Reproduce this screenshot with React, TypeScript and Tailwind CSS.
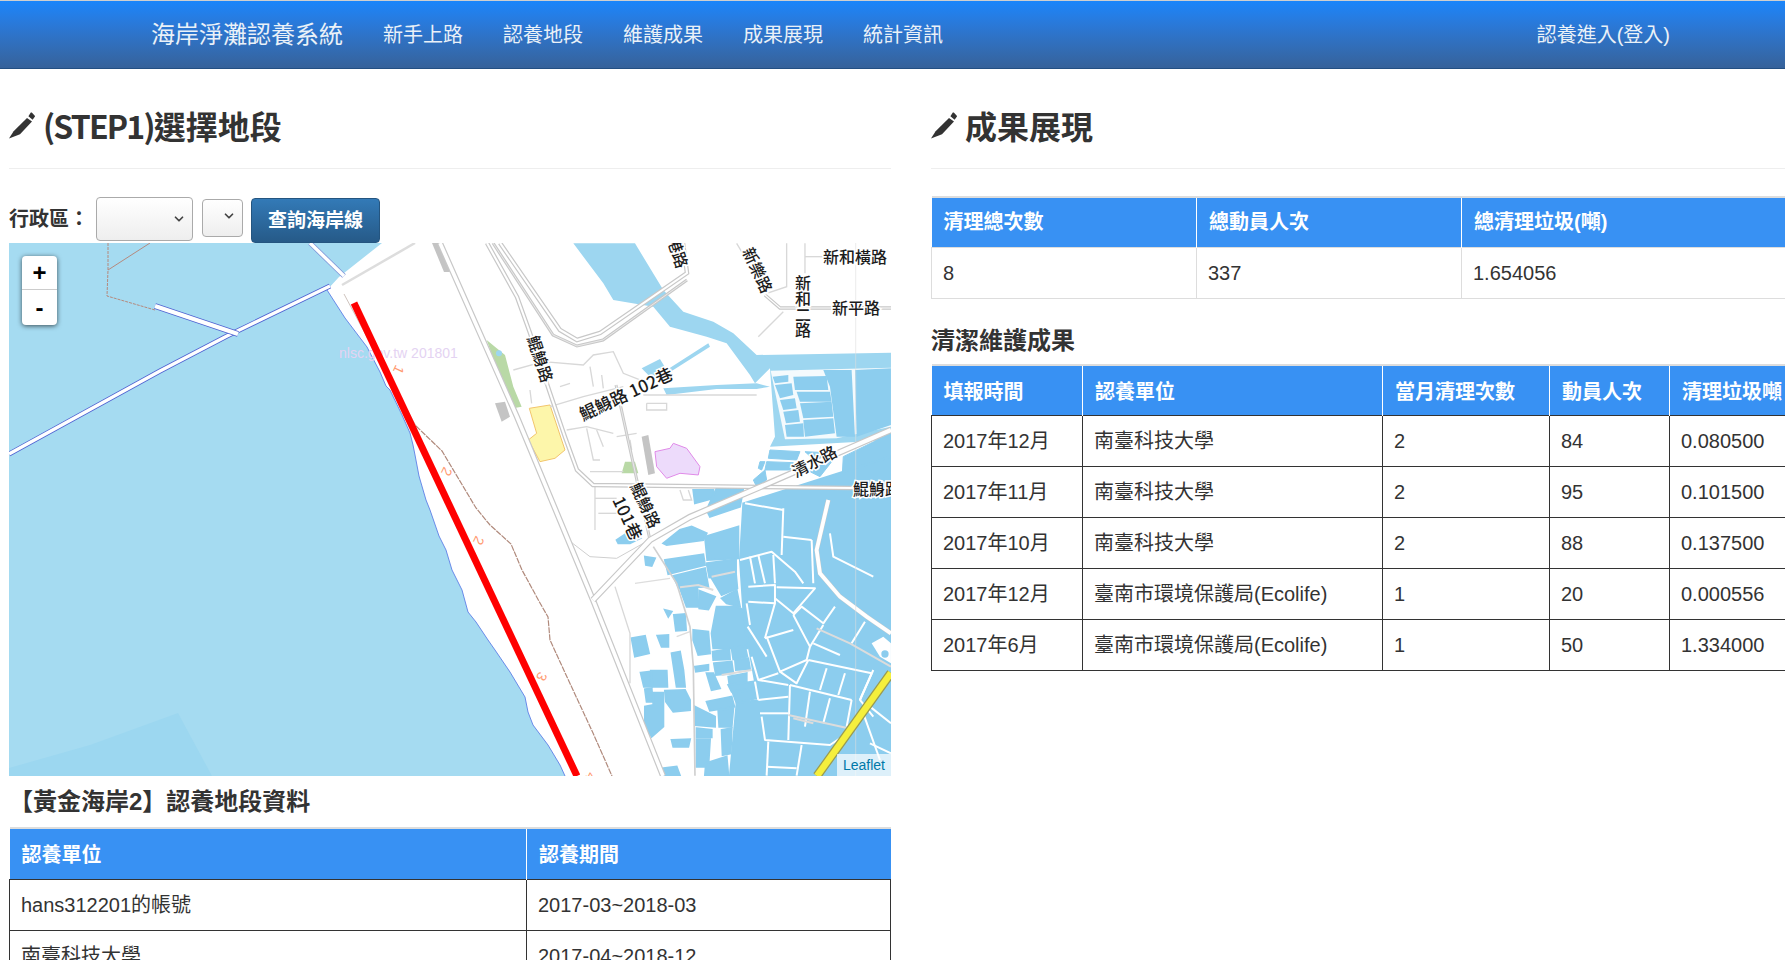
import { ChevronDown } from 'lucide-react'

const navItems = ['新手上路', '認養地段', '維護成果', '成果展現', '統計資訊']

const cleanRows = [
  ['2017年12月', '南臺科技大學', '2', '84', '0.080500'],
  ['2017年11月', '南臺科技大學', '2', '95', '0.101500'],
  ['2017年10月', '南臺科技大學', '2', '88', '0.137500'],
  ['2017年12月', '臺南市環境保護局(Ecolife)', '1', '20', '0.000556'],
  ['2017年6月', '臺南市環境保護局(Ecolife)', '1', '50', '1.334000'],
]

// ponds south of 清水路, traced in 3x crop coords
const lowerPonds = [
  '765,110 865,80 865,175 772,180',
  '770,190 858,178 858,225 778,232',
  '785,235 858,222 862,265 815,285',
  '645,180 760,163 765,195 655,222',
  '670,228 765,205 775,260 685,262',
  '690,265 742,265 745,320 710,320',
  '748,272 795,290 775,328 748,325',
  '815,295 860,270 870,320 830,310',
  '800,320 860,320 880,330 893,445 790,445 785,400',
  '730,390 775,395 780,460 745,465 730,420',
  '788,455 838,447 840,478 790,480',
  '845,445 885,438 892,470 850,478',
  '792,490 845,485 850,520 798,525',
  '855,480 895,475 900,507 858,510',
  '835,530 890,520 890,545 838,552',
  '835,555 910,545 915,565 845,575',
  '848,578 915,568 918,595 860,610',
  '770,605 845,590 853,620 780,632',
  '770,520 790,520 810,565 785,570',
  '735,500 775,495 775,510 738,515',
  '735,620 795,650 795,680 735,675',
  '805,630 850,625 845,680 808,680',
  '740,685 785,690 785,712 740,712',
  '815,690 845,685 842,760 818,765',
  '740,718 780,718 775,800 740,800',
  '768,790 830,770 835,827 765,827',
  '545,415 585,408 597,460 555,470',
  '622,407 655,405 655,440 635,440',
  '672,345 705,342 708,390 678,392',
  '665,460 690,455 700,510 705,560 680,560',
  '572,518 600,515 605,560 582,560',
  '603,512 650,512 652,560 608,560',
  '585,568 605,565 608,605 590,605',
  '645,572 705,570 720,600 720,630 670,635 648,605',
  '610,578 640,578 640,680 605,710 585,680 585,620 610,615',
  '665,720 720,718 715,740 670,740',
  '640,805 680,800 690,827 640,827',
  '585,170 615,175 605,198 588,195',
  '645,330 665,335 655,350',
  '640,130 690,90 725,80 770,100 760,120 650,135',
  '500,120 530,100 570,115 540,130 505,130',
  '730,-30 790,-30 790,-5 735,10',
  '800,-35 880,-35 870,20 780,50 770,30',
  '880,10 1323,-130 1323,827 840,827 860,610 925,600 893,420 880,330 870,180',
]

const pondLines = [
  '1000,25 995,165', '1000,110 1085,120', '870,180 965,155 1035,215 1060,250',
  '900,170 915,250', '925,165 945,250', '970,165 975,250',
  '895,260 975,255 975,310 895,305', '980,262 1095,265 1030,340 975,295',
  '890,310 900,375', '893,380 950,470', '1030,345 1080,440 1070,480 990,515 950,410',
  '945,415 1030,390', '975,310 945,415', '1030,345 1055,320 1120,370 1155,320',
  '1120,375 1080,440', '1205,430 1245,365', '1090,430 1170,465',
  '1075,480 1265,520', '1265,520 1230,600', '1130,505 1110,570', '1185,520 1165,585',
  '990,515 1040,550 1075,480', '905,470 925,540 985,520', '1020,555 1205,600',
  '1080,575 1065,680', '1140,595 1120,670', '1020,555 1015,720',
  '925,600 1015,590', '930,640 1015,640', '935,650 945,720 1140,735 1200,695',
  '1205,600 1190,680', '955,725 950,827', '1055,735 1040,827', '950,800 1040,805',
  '925,540 1015,555', '925,600 915,545', '1270,510 1230,600 1270,650',
  '1260,620 1323,670', '1140,100 1150,170 1270,230', '1000,30 885,10', '1085,120 1090,250',
  '1240,640 1290,780', '1260,730 1323,760',
]

const grayPondLines = [
  '1100,385 1200,430 1323,500', '1015,645 1195,685', '690,262 745,255 790,270',
  '785,230 855,215', '815,525 905,510', '1030,655 1090,670',
]

const upperPonds = [
  '968,410 1015,405 1015,425 975,430',
  '975,435 1025,430 1030,465 990,475',
  '990,480 1035,475 1040,505 1000,510',
  '1000,515 1045,510 1050,545 1008,550',
  '1005,555 1060,550 1062,590 1010,590',
  '1030,410 1130,408 1135,450 1035,450',
  '1040,455 1140,455 1145,485 1050,485',
  '1050,490 1145,485 1150,530 1060,535',
  '1060,540 1150,535 1155,580 1065,590',
  '1120,390 1205,390 1215,590 1160,590 1140,440',
  '1215,390 1323,385 1323,555 1220,590',
]

const midPonds = [
  '960,630 1050,635 1040,660 955,655',
  '950,665 1030,668 1020,690 945,690',
  '930,665 945,665 935,690 925,685',
  '910,720 945,690 950,720 920,740',
  '1065,635 1165,640 1110,710 1070,690 1110,675',
  '1180,650 1323,580 1323,740 1175,740',
]

const streets = [
  '190,390 280,365 400,375 430,345 490,335 520,400 570,420', '420,380 430,440',
  '455,405 460,445', '330,440 360,430', '240,450 245,490', '350,570 410,560 490,580',
  '410,565 430,660 450,660', '440,570 460,620', '500,590 560,580', '540,600 545,630',
  '420,695 520,695', '435,740 435,870', '435,775 500,775', '445,820 510,820',
  '690,750 700,780 725,780 715,750', '1000,215 925,290', '1065,10 1065,100', '1065,50 1120,50',
  '860,10 950,160 1010,140 1010,10', '590,490 650,490 650,510 590,510 590,490',
  '580,465 920,465', '300,500 400,470 520,440',
]

function Road({ points, w = 5 }: { points: string; w?: number }) {
  return (
    <>
      <polyline points={points} fill="none" stroke="#c8c8c8" strokeWidth={w} />
      <polyline points={points} fill="none" stroke="#ffffff" strokeWidth={w - 2.4} />
    </>
  )
}

function MapLabel({ x, y, r = 0, size = 16, text }: { x: number; y: number; r?: number; size?: number; text: string }) {
  return (
    <text
      transform={`translate(${x} ${y}) rotate(${r})`}
      fontSize={size}
      fill="#1c1c1c"
      stroke="#ffffff"
      strokeWidth={3}
      className="font-['Noto_Sans_CJK_TC',sans-serif] font-medium [paint-order:stroke]"
    >
      {text}
    </text>
  )
}

function CoastMap() {
  const coast =
    '327,290 345,318 367,347 380,372 386,386 390,390 402,415 410,433 413,445 415,455 419,476 426,500 430,510 439,536 446,550 452,570 462,590 468,612 476,622 488,640 495,650 510,672 525,697 528,712 533,725 548,745 560,765 565,776'
  return (
    <svg viewBox="9 243 882 533" className="block h-full w-full">
      <rect x="9" y="243" width="882" height="533" fill="#a5dbf1" />
      <polygon points="9,768 90,745 178,713 212,776 9,776" fill="#9cd7f0" />
      {/* land */}
      <polygon points={`382,243 339,277 ${coast} 891,776 891,243`} fill="#ffffff" />
      <polyline points={coast} fill="none" stroke="#5d7fe6" strokeWidth="0.9" />
      {/* breakwaters */}
      <polyline points="9,454 160,371 227,336 330,286" fill="none" stroke="#4f62d2" strokeWidth="5" />
      <polyline points="9,454 160,371 227,336 330,286" fill="none" stroke="#ffffff" strokeWidth="3.4" />
      <polyline points="155,306 238,334" fill="none" stroke="#4f62d2" strokeWidth="6" />
      <polyline points="155,306 238,334" fill="none" stroke="#ffffff" strokeWidth="4.4" />
      <polyline points="310,243 344,276" fill="none" stroke="#7c93d8" strokeWidth="5" />
      <polyline points="310,243 344,276" fill="none" stroke="#ffffff" strokeWidth="3.5" />
      <polyline points="108,243 108,270 107,296 155,310" fill="none" stroke="#b5897d" strokeWidth="1" strokeDasharray="3 1" />
      <polyline points="108,270 150,243" fill="none" stroke="#b5897d" strokeWidth="1" />
      <polyline points="344,294 375,352 416,426" fill="none" stroke="#cfc4be" strokeWidth="1" />
      <polyline points="415,243 342,285" fill="none" stroke="#dddddd" strokeWidth="2.5" />
      <polygon points="432,243 442,243 450,272 444,272" fill="#c4c4c4" />

      {/* water right side, 3x crop coords */}
      <g transform="translate(450 240) scale(0.3333)">
        <polygon
          points="370,10 555,10 640,150 700,215 790,245 850,280 920,345 1323,338 1323,600 960,620 975,590 960,385 915,430 900,405 830,310 770,290 660,260 610,200 490,180 460,130"
          fill="#9dd6f0"
        />
        <polygon points="640,445 800,435 920,430 960,440 920,447 800,447 650,465" fill="#9dd6f0" />
        <polygon points="575,385 630,357 650,390 775,310 780,320 670,390 620,415 600,410" fill="#9dd6f0" />
        <polygon points="962,392 1323,383 1323,560 1160,595 1005,598" fill="#f4fafd" />
        {upperPonds.map((p) => (
          <polygon key={p} points={p} fill="#8ccdee" />
        ))}
        {midPonds.map((p) => (
          <polygon key={p} points={p} fill="#8ccdee" stroke="#8ccdee" strokeWidth="3" />
        ))}
      </g>
      <g transform="translate(450 500) scale(0.3333)">
        {lowerPonds.map((p) => (
          <polygon key={p} points={p} fill="#8ccdee" stroke="#8ccdee" strokeWidth="6" />
        ))}
        {pondLines.map((p) => (
          <polyline key={p} points={p} fill="none" stroke="#ffffff" strokeWidth="6" strokeLinejoin="round" />
        ))}
        {grayPondLines.map((p) => (
          <polyline key={p} points={p} fill="none" stroke="#dcdcdc" strokeWidth="6" />
        ))}
        <polygon points="1265,430 1300,410 1323,430 1323,490 1290,470" fill="#ffffff" />
        <circle cx="1305" cy="462" r="11" fill="#8ccdee" />
        <polyline points="495,260 540,400 540,550" fill="none" stroke="#d8d8d8" strokeWidth="4" />
        <polyline points="555,250 660,235" fill="none" stroke="#dddddd" strokeWidth="4" />
        <polyline points="680,410 720,395" fill="none" stroke="#dddddd" strokeWidth="4" />
        <polyline points="355,120 420,170 500,175 580,130" fill="none" stroke="#cfcfcf" strokeWidth="3" />
        <polyline points="610,140 680,250 720,380 730,500 735,827" fill="none" stroke="#d0d0d0" strokeWidth="5" />
        <Road points="1135,0 1100,150 1110,220 1170,290 1250,350 1323,400" w={14} />
      </g>

      {/* land use */}
      <g transform="translate(450 240) scale(0.3333)">
        <polygon points="110,300 165,345 190,440 215,500 190,505 160,440" fill="#b9d9a6" />
        <circle cx="147" cy="340" r="9" fill="#9dd6f0" />
        <polygon points="238,505 300,495 345,630 315,655 270,665 235,600 260,580" fill="#fdf6aa" stroke="#f2c56c" strokeWidth="3" />
        <polygon points="615,635 660,625 670,610 710,625 750,680 745,705 690,700 650,715 620,680" fill="#eddbfb" stroke="#e08ae8" strokeWidth="3" />
        <polygon points="525,665 555,665 565,700 515,700" fill="#b9d9a6" />
        <polygon points="135,490 165,485 180,530 155,545" fill="#c4c4c4" />
        <polygon points="575,590 595,585 615,700 595,705" fill="#c4c4c4" />
        {streets.map((p) => (
          <polyline key={p} points={p} fill="none" stroke="#d8d8d8" strokeWidth="4" />
        ))}
      </g>

      {/* roads */}
      <polyline points="855.7,243 855.7,776" fill="none" stroke="#dddddd" strokeWidth="0.6" />
      <Road points="440,243 517,417 593,600 663,776" w={6} />
      <Road points="487,243 517,297 530,333 550,393 565,437 577,470 593,485 853,488 891,490" w={4.5} />
      <Road points="500,243 560,330 577,340 600,333 687,273 683,243" w={4.5} />
      <Road points="493,243 553,335 577,346 603,340 687,280" w={3} />
      <Road points="616,385 650,540" w={3} />
      <Road points="593,600 650,540 690,517 760,487 891,430" w={6.5} />
      <Road points="765,295 780,308 891,308" w={3.5} />
      <polyline points="817,776 891,673" fill="none" stroke="#9a9a50" strokeWidth="9" />
      <polyline points="817,776 891,673" fill="none" stroke="#f5ef3c" strokeWidth="6.5" />

      {/* watermark and survey line */}
      <text x="339" y="358" fontSize="14" fill="#e4d3f2">nlsc.gov.tw 201801</text>
      <polyline
        points="416,426 442,451 476,508 490,525 511,544 522,570 540,603 548,617 550,640 567,677 580,705 593,733 612,776"
        fill="none"
        stroke="#b08a7c"
        strokeWidth="1.2"
        strokeDasharray="6 1"
      />
      <line x1="354" y1="303" x2="577" y2="776" stroke="#ff0000" strokeWidth="7" />
      {[
        [396, 364, '1'],
        [444, 466, '2'],
        [476, 535, '2'],
        [539, 671, '3'],
        [588, 771, '4'],
      ].map(([x, y, n]) => (
        <text key={`${x}`} transform={`translate(${x} ${y}) rotate(115)`} fontSize="14" fill="#ff9a70">
          {n}
        </text>
      ))}

      {/* labels */}
      <MapLabel x={823} y={263} text="新和橫路" />
      <MapLabel x={832} y={314} text="新平路" />
      <MapLabel x={795} y={289} text="新" />
      <MapLabel x={795} y={305} text="和" />
      <MapLabel x={795} y={321} text="二" />
      <MapLabel x={795} y={336} text="路" />
      <MapLabel x={742} y={251} r={65} text="新樂路" />
      <MapLabel x={667} y={239} r={72} text="港路" />
      <MapLabel x={527} y={338} r={72} text="鯤鯓路" />
      <MapLabel x={583} y={421} r={-25} size={17} text="鯤鯓路 102巷" />
      <MapLabel x={796} y={478} r={-28} text="清水路" />
      <MapLabel x={853} y={495} text="鯤鯓路" />
      <MapLabel x={630} y={486} r={65} text="鯤鯓路" />
      <MapLabel x={612} y={500} r={65} size={17} text="101巷" />
    </svg>
  )
}

function Pencil() {
  return (
    <svg viewBox="0 0 26 27" className="h-[27px] w-[26px] shrink-0" fill="#333333">
      <path d="M0 26.5 L4.6 19.2 L18 6 L23 9.6 L11 22.2 Z" />
      <path d="M19.4 4.2 L21.8 0.6 Q22.2 0.2 22.8 0.6 L25.8 3.8 Q26.2 4.4 25.8 4.8 L23.6 7.8 Z" />
    </svg>
  )
}

function Heading({ latin, children }: { latin?: string; children: string }) {
  return (
    <div className="border-b border-[#eeeeee] pt-[33px] pb-[20px]">
      <h1 className="flex h-[46px] items-center gap-2 font-['Noto_Sans_CJK_TC',sans-serif] text-[32px] font-bold text-[#333333]">
        <Pencil />
        <span>
          {latin ? <span className="tracking-[-1.8px]">{latin}</span> : null}
          {children}
        </span>
      </h1>
    </div>
  )
}

function Th({ children, className = '' }: { children: string; className?: string }) {
  return (
    <th className={`border-r border-white bg-[#3891f3] px-3 text-left font-bold whitespace-nowrap text-white last:border-r-0 ${className}`}>
      {children}
    </th>
  )
}

function Td({ children, dark = true }: { children: string; dark?: boolean }) {
  return (
    <td className={`h-[51px] border pr-3 pl-[11px] align-middle whitespace-nowrap ${dark ? 'border-[#333333]' : 'border-[#dddddd]'}`}>
      {children}
    </td>
  )
}

export default function App() {
  return (
    <div className="h-[960px] w-[1785px] overflow-hidden bg-white font-['Liberation_Sans','Noto_Sans_CJK_TC',sans-serif] text-[20px] leading-[26px] text-[#333333]">
      <nav className="flex h-[69px] items-center border-t border-b border-t-[#cfcfcf] border-b-[#234f82] bg-gradient-to-b from-[#1a85fb] to-[#36629a] pl-[151px] text-[#eaf1f8]">
        <span className="mr-5 text-[24px]">海岸淨灘認養系統</span>
        {navItems.map((item) => (
          <span key={item} className="px-5">
            {item}
          </span>
        ))}
        <span className="mr-[115px] ml-auto">認養進入(登入)</span>
      </nav>

      <div className="flex pl-[9px]">
        <section className="w-[882px] shrink-0">
          <Heading latin="(STEP1)">選擇地段</Heading>
          <div className="mt-[28px] flex h-[46px] items-start font-bold">
            <span className="mt-[9px] w-[87px]">行政區：</span>
            <div className="flex h-[44px] w-[97px] items-center justify-end rounded-[4px] border border-[#aaaaaa] bg-gradient-to-b from-white to-[#eeeeee] pr-[6px]">
              <ChevronDown size={14} strokeWidth={3} className="text-[#444444]" />
            </div>
            <div className="mt-[2px] ml-[9px] flex h-[38px] w-[41px] items-center justify-end rounded-[4px] border border-[#aaaaaa] bg-gradient-to-b from-white to-[#eeeeee] pr-[6px]">
              <ChevronDown size={14} strokeWidth={3} className="-mt-[4px] text-[#444444]" />
            </div>
            <button className="mt-[1px] ml-2 flex h-[45px] w-[129px] items-center justify-center rounded-[4px] border border-[#245580] bg-gradient-to-b from-[#337ab7] to-[#265a88] text-[19px] text-white">
              查詢海岸線
            </button>
          </div>

          <div className="relative h-[533px] overflow-hidden">
            <CoastMap />
            <div className="absolute top-[13px] left-[13px] w-[35px] overflow-hidden rounded-[4px] bg-white font-['Liberation_Sans',sans-serif] text-black shadow-[0_1px_5px_rgba(0,0,0,0.65)]">
              <div className="flex h-[34px] items-center justify-center border-b border-[#cccccc] text-[24px] font-bold">+</div>
              <div className="flex h-[35px] items-center justify-center text-[24px] font-bold">-</div>
            </div>
            <div className="absolute right-0 bottom-0 bg-white/70 px-[6px] text-[14px] leading-[22px] text-[#0078a8]">Leaflet</div>
          </div>

          <h3 className="flex h-[51px] items-center text-[24px] font-bold">【黃金海岸2】認養地段資料</h3>
          <table className="w-[882px] table-fixed border-collapse border-t-2 border-[#dddddd]">
            <thead>
              <tr>
                <Th className="h-[51px] w-[517px] pt-[2px]">認養單位</Th>
                <Th className="h-[51px] pt-[2px]">認養期間</Th>
              </tr>
            </thead>
            <tbody>
              <tr>
                <Td>hans312201的帳號</Td>
                <Td>2017-03~2018-03</Td>
              </tr>
              <tr>
                <Td>南臺科技大學</Td>
                <Td>2017-04~2018-12</Td>
              </tr>
            </tbody>
          </table>
        </section>

        <section className="ml-[40px] w-[870px] shrink-0">
          <Heading>成果展現</Heading>
          <table className="mt-[27px] w-[870px] table-fixed border-collapse border-t-2 border-[#dddddd]">
            <thead>
              <tr>
                <Th className="h-[50px] w-[265px]">清理總次數</Th>
                <Th className="h-[50px] w-[265px]">總動員人次</Th>
                <Th className="h-[50px]">總清理垃圾(噸)</Th>
              </tr>
            </thead>
            <tbody>
              <tr>
                <Td dark={false}>8</Td>
                <Td dark={false}>337</Td>
                <Td dark={false}>1.654056</Td>
              </tr>
            </tbody>
          </table>

          <h3 className="mt-[19px] flex h-[46px] items-center text-[24px] font-bold">清潔維護成果</h3>
          <table className="w-[870px] table-fixed border-collapse border-t-2 border-[#dddddd]">
            <thead>
              <tr>
                <Th className="h-[51px] w-[151px] pt-[3px]">填報時間</Th>
                <Th className="h-[51px] w-[300px] pt-[3px]">認養單位</Th>
                <Th className="h-[51px] w-[167px] pt-[3px]">當月清理次數</Th>
                <Th className="h-[51px] w-[120px] pt-[3px]">動員人次</Th>
                <Th className="h-[51px] pt-[3px]">清理垃圾噸</Th>
              </tr>
            </thead>
            <tbody>
              {cleanRows.map((row) => (
                <tr key={row[0] + row[3]}>
                  {row.map((cell) => (
                    <Td key={cell}>{cell}</Td>
                  ))}
                </tr>
              ))}
            </tbody>
          </table>
        </section>
      </div>
    </div>
  )
}
